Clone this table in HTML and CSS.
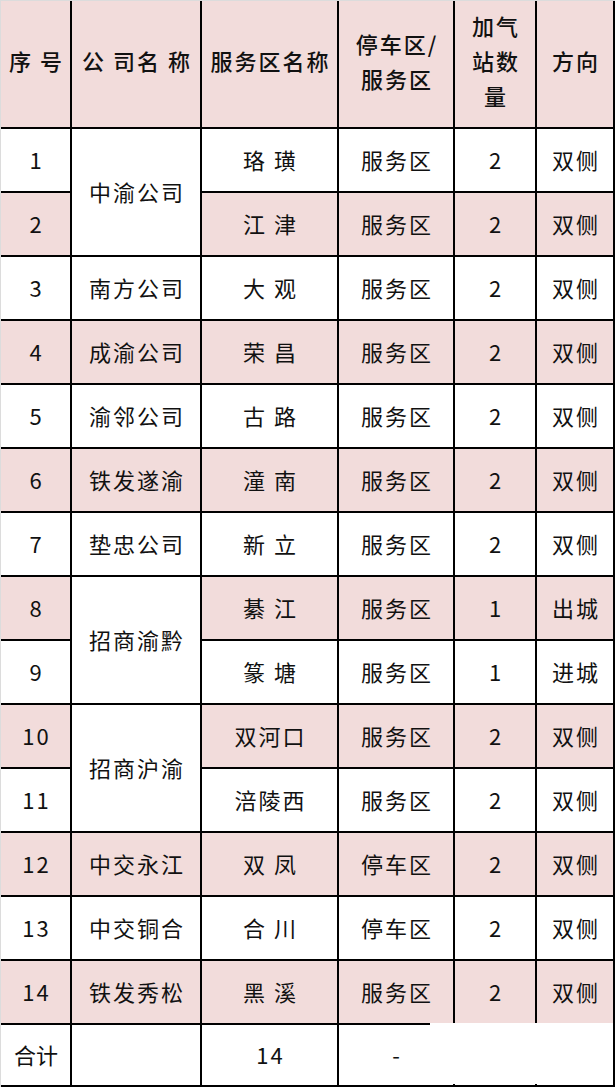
FILE: index.html
```html
<!DOCTYPE html>
<html lang="zh">
<head>
<meta charset="utf-8">
<link rel="stylesheet" href="styles.css">
</head>
<body>
<div class="sheet">
<table class="grid">
  <thead>
    <tr class="head">
      <th class="c1">序 号</th>
      <th class="c2">公 司名 称</th>
      <th class="c3">服务区名称</th>
      <th class="c4">停车区/<br>服务区</th>
      <th class="c5">加气<br>站数<br>量</th>
      <th class="c6">方向</th>
    </tr>
  </thead>
  <tbody>
    <tr><td>1</td><td rowspan="2" class="plain">中渝公司</td><td>珞 璜</td><td>服务区</td><td>2</td><td>双侧</td></tr>
    <tr class="pink"><td>2</td><td>江 津</td><td>服务区</td><td>2</td><td>双侧</td></tr>
    <tr><td>3</td><td>南方公司</td><td>大 观</td><td>服务区</td><td>2</td><td>双侧</td></tr>
    <tr class="pink"><td>4</td><td>成渝公司</td><td>荣 昌</td><td>服务区</td><td>2</td><td>双侧</td></tr>
    <tr><td>5</td><td>渝邻公司</td><td>古 路</td><td>服务区</td><td>2</td><td>双侧</td></tr>
    <tr class="pink"><td>6</td><td>铁发遂渝</td><td>潼 南</td><td>服务区</td><td>2</td><td>双侧</td></tr>
    <tr><td>7</td><td>垫忠公司</td><td>新 立</td><td>服务区</td><td>2</td><td>双侧</td></tr>
    <tr class="pink"><td>8</td><td rowspan="2" class="plain">招商渝黔</td><td>綦 江</td><td>服务区</td><td>1</td><td>出城</td></tr>
    <tr><td>9</td><td>篆 塘</td><td>服务区</td><td>1</td><td>进城</td></tr>
    <tr class="pink"><td>10</td><td rowspan="2" class="plain">招商沪渝</td><td>双河口</td><td>服务区</td><td>2</td><td>双侧</td></tr>
    <tr><td>11</td><td>涪陵西</td><td>服务区</td><td>2</td><td>双侧</td></tr>
    <tr class="pink"><td>12</td><td>中交永江</td><td>双 凤</td><td>停车区</td><td>2</td><td>双侧</td></tr>
    <tr><td>13</td><td>中交铜合</td><td>合 川</td><td>停车区</td><td>2</td><td>双侧</td></tr>
    <tr class="pink"><td>14</td><td>铁发秀松</td><td>黑 溪</td><td>服务区</td><td>2</td><td>双侧</td></tr>
    <tr class="total"><td class="left">合计</td><td></td><td>14</td><td>-</td><td></td><td></td></tr>
  </tbody>
</table>
<div class="patch"></div>
</div>
</body>
</html>
```

FILE: styles.css
```css
html, body {
  margin: 0;
  padding: 0;
  background: #ffffff;
}

.sheet {
  position: relative;
  width: 615px;
  height: 1089px;
  overflow: hidden;
}

.grid {
  border-collapse: separate;
  border-spacing: 0;
  table-layout: fixed;
  width: 615px;
  border-left: 1px solid #dcdcdc;
  border-top: 1px solid #dcdcdc;
  font-family: "Noto Sans CJK SC", "Noto Sans", sans-serif;
  font-size: 22px;
  color: #111111;
}

.grid th,
.grid td {
  box-sizing: border-box;
  border-right: 2px solid #000;
  border-bottom: 2px solid #000;
  padding: 0 0 3px 2px;
  text-align: center;
  vertical-align: middle;
  letter-spacing: 2px;
  height: 64px;
  white-space: nowrap;
}

.head th {
  background: #f2dcdb;
  height: 128px;
  font-weight: 500;
  line-height: 35px;
  padding-bottom: 7px;
}

.c1 { width: 71px; }
.c2 { width: 130px; }
.c3 { width: 137px; }
.c4 { width: 116px; }
.c5 { width: 82px; }
.c6 { width: 78px; }

.pink td {
  background: #f2dcdb;
}

.pink td.plain,
td.plain {
  background: #ffffff;
}

.total td {
  height: 62px;
}

.total td.left {
  text-align: left;
  padding-left: 13px;
  letter-spacing: 0;
}

.patch {
  position: absolute;
  left: 430px;
  top: 1023px;
  width: 183px;
  height: 61px;
  background: #ffffff;
}
```
